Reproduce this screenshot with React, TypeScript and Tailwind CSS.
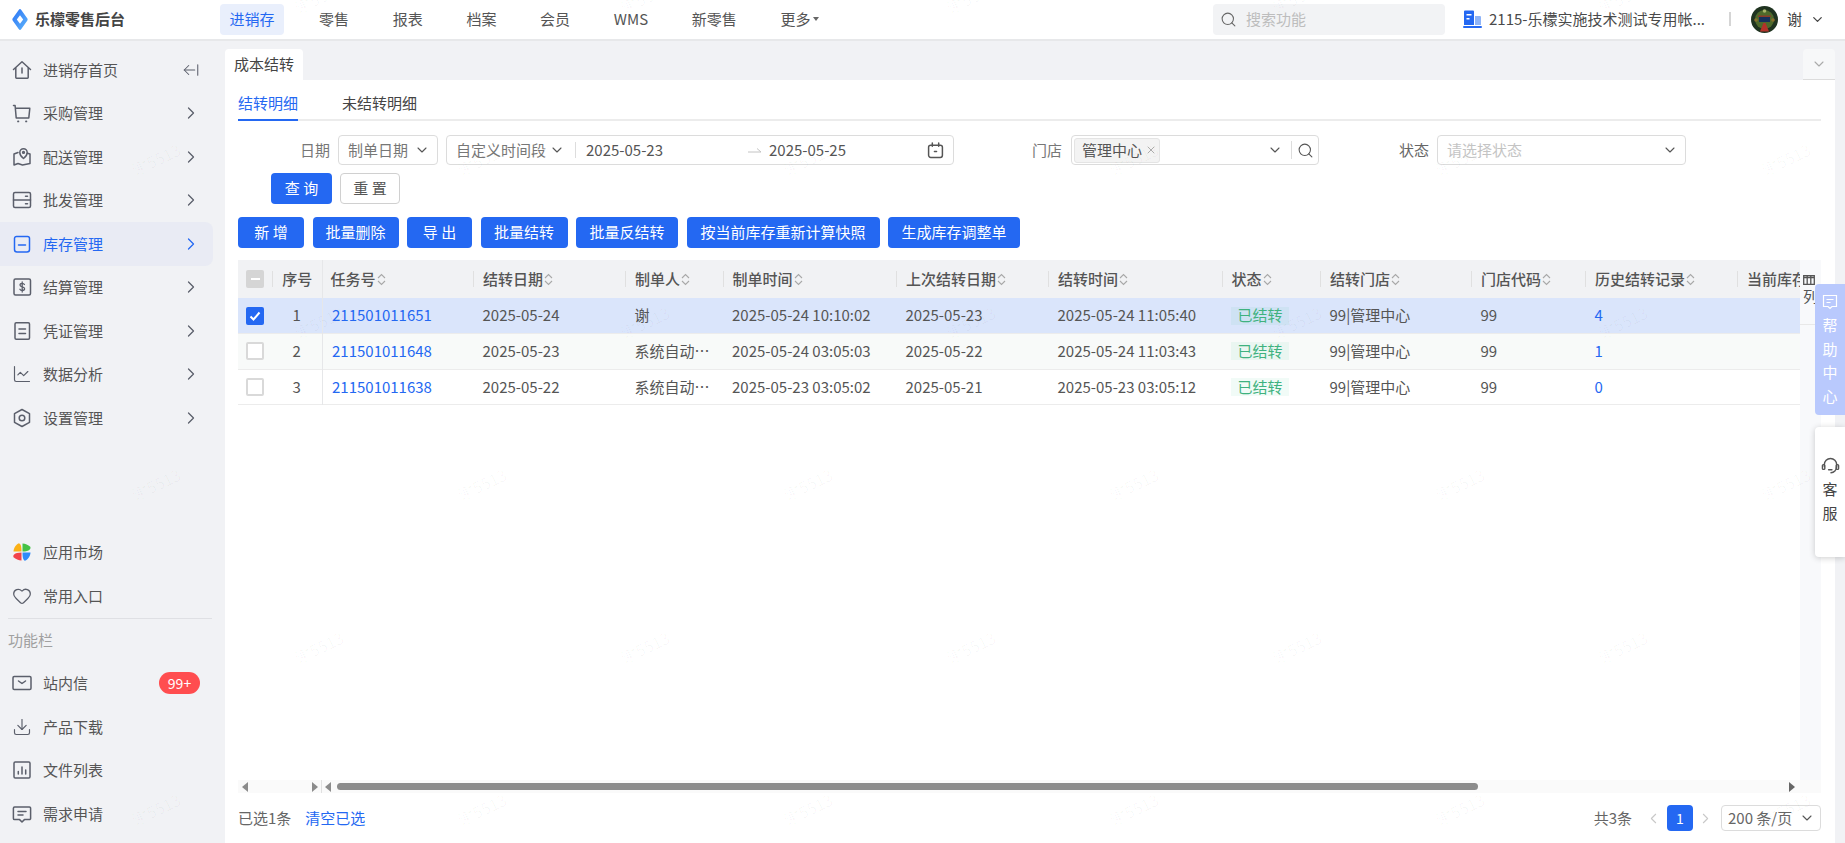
import { ArrowLeftFromLine, ChartLine, ChevronDown, ChevronLeft, ChevronRight, Download, Heart, Search, X } from "lucide-react";
import type { ReactNode } from "react";

const BLUE = "text-[#2468f2]";

function Svg({ children, className = "" }: { children: ReactNode; className?: string }) {
  return (
    <svg viewBox="0 0 20 20" fill="none" stroke="currentColor" strokeWidth="1.5" strokeLinecap="round" strokeLinejoin="round" className={`size-[20px] shrink-0 ${className}`}>
      {children}
    </svg>
  );
}

const icons: Record<string, ReactNode> = {
  home: (
    <Svg>
      <path d="M1.5 9.5 10 1.8l8.5 7.7" />
      <path d="M3.8 8v9.5a.7.7 0 0 0 .7.7h11a.7.7 0 0 0 .7-.7V8" />
      <path d="M10 8v5" />
    </Svg>
  ),
  cart: (
    <Svg>
      <path d="M1.5 2.5h1.6l1.1 12.4h12.6l1-9.6H3.5" />
      <path d="M6 18.4h.4M14 18.4h.4" strokeWidth="1.8" />
    </Svg>
  ),
  map: (
    <Svg>
      <path d="M6 5.5 2 7v11l4-1.5 4.5 1.5 7.5-1.5V7l-2.5-.8" />
      <path d="M11.5 11.5S7.8 8.5 7.8 5.4a3.7 3.7 0 0 1 7.4 0c0 3.1-3.7 6.1-3.7 6.1Z" />
      <circle cx="11.5" cy="5.4" r=".9" />
    </Svg>
  ),
  server: (
    <Svg>
      <rect x="1.5" y="2.5" width="17" height="15" rx="1.5" />
      <path d="M1.5 10h17M13.5 6.3h2M13.5 13.8h2" />
    </Svg>
  ),
  stock: (
    <Svg>
      <path d="M4.5 2.5h11a2 2 0 0 1 2 2v11a2.5 2.5 0 0 1-2.5 2.5H5a2.5 2.5 0 0 1-2.5-2.5v-11a2 2 0 0 1 2-2Z" />
      <path d="M6.5 11h7" />
    </Svg>
  ),
  money: (
    <Svg>
      <rect x="2" y="2" width="16.5" height="16" rx="1.5" />
      <path d="M12.4 7.5c-.4-.8-1.2-1.2-2.2-1.2-1.2 0-2.2.7-2.2 1.8 0 2.5 4.6 1.2 4.6 3.7 0 1.1-1 1.8-2.3 1.8-1.1 0-2-.5-2.4-1.3M10.2 5v10" strokeWidth="1.3" />
    </Svg>
  ),
  voucher: (
    <Svg>
      <rect x="3" y="1.8" width="14.5" height="16.4" rx="1.2" />
      <path d="M7 8h6.5M7 12.5h6.5" />
    </Svg>
  ),
  chart: <ChartLine className="size-[20px] shrink-0" strokeWidth={1.4} />,
  hex: (
    <Svg>
      <path d="m10 1.5 7.5 4.2v8.6L10 18.5l-7.5-4.2V5.7L10 1.5Z" />
      <circle cx="10" cy="10" r="2.8" />
    </Svg>
  ),
  heart: <Heart className="size-[20px] shrink-0" strokeWidth={1.5} />,
  mail: (
    <Svg>
      <rect x="1" y="3.5" width="18" height="13" rx="1.2" />
      <path d="m6.5 8 3.5 2.5L13.5 8" />
    </Svg>
  ),
  download: <Download className="size-[20px] shrink-0" strokeWidth={1.4} />,
  bars: (
    <Svg>
      <rect x="2" y="2" width="16" height="16" rx="1.2" />
      <path d="M6.3 14v-2.5M10 14V7M13.7 14v-4" />
    </Svg>
  ),
  message: (
    <Svg>
      <path d="M2.6 3h14.8a1.2 1.2 0 0 1 1.2 1.2v10.2a1.2 1.2 0 0 1-1.2 1.2h-5L10 18l-2.4-2.4h-5a1.2 1.2 0 0 1-1.2-1.2V4.200A1.2 1.2 0 0 1 2.600 3Z" />
      <path d="M6 7.500h8M6 11h5" />
    </Svg>
  ),
  market: (
    <svg viewBox="0 0 20 20" className="size-[20px] shrink-0">
      <path d="M9.500 9.500H1.500C1.500 6 4 2.500 7 1.200c1.800.9 2.500 3 2.500 8.300Z" fill="#fbb116" />
      <path d="M10.500 9.500V1.500c3 0 5.500 1.700 7.800 3.200.8 1.700-.3 4.800-7.800 4.800Z" fill="#45c246" />
      <path d="M10.500 10.500h8c0 3.500-2.500 7-5.500 8.300-1.800-.9-2.500-3-2.500-8.300Z" fill="#2f8bfa" />
      <path d="M9.500 10.500v8c-3 0-5.800-1.700-8-3.200-.8-1.700.5-4.800 8-4.800Z" fill="#f2434a" />
    </svg>
  ),
};

const mainMenu = [
  { label: "采购管理", icon: "cart" },
  { label: "配送管理", icon: "map" },
  { label: "批发管理", icon: "server" },
  { label: "库存管理", icon: "stock", active: true },
  { label: "结算管理", icon: "money" },
  { label: "凭证管理", icon: "voucher" },
  { label: "数据分析", icon: "chart" },
  { label: "设置管理", icon: "hex" },
];

function MenuRow({ icon, label, active, right }: { icon: string; label: string; active?: boolean; right?: ReactNode }) {
  return (
    <div className={`flex h-[43.5px] w-[213px] items-center rounded-r-lg pl-[12px] ${active ? `bg-[#e9ebf4] ${BLUE}` : "text-[#5b5f6b]"}`}>
      {icons[icon]}
      <span className={`ml-[11px] flex-1 text-[15px] ${active ? "" : "text-[#555555]"}`}>{label}</span>
      {right}
    </div>
  );
}

function Sidebar() {
  const chevron = <ChevronRight className="mr-[12px] size-[20px]" strokeWidth={1.5} />;
  return (
    <aside className="flex h-full w-[225px] shrink-0 flex-col bg-[#f1f2f5] pb-[7.500px] pt-[7px]">
      <MenuRow icon="home" label="进销存首页" right={<ArrowLeftFromLine className="mr-[13px] size-[18px]" strokeWidth={1.4} />} />
      {mainMenu.map(m => (
        <MenuRow key={m.label} icon={m.icon} label={m.label} active={m.active} right={chevron} />
      ))}
      <div className="mt-auto">
        <MenuRow icon="market" label="应用市场" />
        <MenuRow icon="heart" label="常用入口" />
        <div className="ml-[8px] w-[204px] border-t border-[#dfe0e4]" />
        <div className="flex h-[43px] items-center pl-[8px] text-[15px] text-[#a0a0a0]">功能栏</div>
        <MenuRow
          icon="mail"
          label="站内信"
          right={<span className="mr-[13px] flex h-[22px] w-[41px] items-center justify-center rounded-full bg-[#ff4d4f] text-[14px] text-white">99+</span>}
        />
        <MenuRow icon="download" label="产品下载" />
        <MenuRow icon="bars" label="文件列表" />
        <MenuRow icon="message" label="需求申请" />
      </div>
    </aside>
  );
}

function TopBar() {
  const nav = ["零售", "报表", "档案", "会员", "WMS", "新零售"];
  return (
    <header className="flex h-[41px] shrink-0 items-center border-b-2 border-[#e7e8ea] bg-white pb-[1px]">
      <div className="flex w-[220px] shrink-0 items-center pl-[12px]">
        <svg viewBox="0 0 16 21" className="h-[21px] w-[16px]">
          <defs>
            <linearGradient id="logoFill" x1="0" y1="0" x2="1" y2="1">
              <stop offset="0" stopColor="#2b74f5" />
              <stop offset="1" stopColor="#5fb4fb" />
            </linearGradient>
          </defs>
          <path d="M6.700 1 .8 9.300a2 2 0 0 0 0 2.400L6.700 20a1.600 1.600 0 0 0 2.600 0l5.900-8.300a2 2 0 0 0 0-2.400L9.300 1a1.600 1.600 0 0 0-2.600 0Z" fill="url(#logoFill)" />
          <path d="M8 6.200 11.200 10.500 8 14.800 4.800 10.500Z" fill="#fff" />
        </svg>
        <span className="ml-[7px] text-[15px] font-bold text-[#444444]">乐檬零售后台</span>
      </div>
      <div className={`flex h-[31px] w-[64px] items-center justify-center rounded-[4px] bg-[#e9effc] text-[15px] ${BLUE}`}>进销存</div>
      <nav className="ml-[35px] flex items-center gap-[43.700px] text-[15px] text-[#555555]">
        {nav.map(n => (
          <span key={n}>{n}</span>
        ))}
        <span className="flex items-center">
          更多
          <span className="ml-[2px] h-0 w-0 border-x-[3.500px] border-t-[4px] border-x-transparent border-t-[#666666]" />
        </span>
      </nav>
      <div className="ml-auto flex h-[31px] w-[232px] items-center rounded-[4px] bg-[#f2f3f5] pl-[7px] text-[15px] text-[#bdbdbd]">
        <Search className="size-[17px] text-[#666666]" strokeWidth={1.5} />
        <span className="ml-[9px]">搜索功能</span>
      </div>
      <svg viewBox="0 0 19 18" className="ml-[18px] h-[18px] w-[19px] shrink-0">
        <path d="M1 1.500A1 1 0 0 1 2 .5h8a1 1 0 0 1 1 1V15H1Z" fill="#2468f2" />
        <path d="M12 6h5a1 1 0 0 1 1 1v8h-6Z" fill="#8fb4f8" />
        <rect x="3.500" y="4" width="5" height="1.500" fill="#fff" />
        <rect x="3.500" y="8" width="3" height="1.500" fill="#fff" />
        <rect y="16" width="19" height="2" rx="1" fill="#2468f2" />
      </svg>
      <span className="ml-[7px] w-[218px] whitespace-nowrap text-[15px] text-[#4a4a4a]">2115-乐檬实施技术测试专用帐...</span>
      <span className="ml-[22px] h-[14px] w-[2px] bg-[#d5d5d5]" />
      <svg viewBox="0 0 27 27" className="ml-[20px] size-[27px] shrink-0">
        <circle cx="13.500" cy="13.500" r="13.500" fill="#1f3320" />
        <circle cx="13.500" cy="13.500" r="9.500" fill="#4f6a2c" />
        <circle cx="13.500" cy="5" r="1.800" fill="#a8b46a" />
        <rect x="8" y="11" width="11" height="5" fill="#16305c" />
        <rect x="7" y="9.500" width="13" height="1.500" fill="#8c3a2a" />
        <path d="M9 25.500 12.500 17h2L18 25.500Z" fill="#b3322a" />
        <circle cx="5" cy="14" r="1.800" fill="#8a6f2c" />
        <circle cx="22" cy="14" r="1.800" fill="#8a6f2c" />
      </svg>
      <span className="ml-[9px] text-[15px] text-[#444444]">谢</span>
      <ChevronDown className="ml-[8px] mr-[20px] size-[15px] text-[#444444]" strokeWidth={2} />
    </header>
  );
}

function FieldBox({ className = "", children }: { className?: string; children: ReactNode }) {
  return <div className={`flex h-[30px] shrink-0 items-center rounded-[4px] border border-[#dcdcdc] text-[15px] ${className}`}>{children}</div>;
}

const Chev = ({ className = "" }: { className?: string }) => <ChevronDown className={`size-[16px] shrink-0 text-[#555555] ${className}`} strokeWidth={1.6} />;

function Filters() {
  return (
    <div className="mt-[14px] flex h-[30px] items-center text-[15px] text-[#777777]">
      <span className="ml-[62px] w-[38px] shrink-0">日期</span>
      <FieldBox className="w-[100px] pl-[9px] text-[#777777]">
        <span className="flex-1">制单日期</span>
        <Chev className="mr-[7px]" />
      </FieldBox>
      <FieldBox className="ml-[8px] w-[508px] pl-[9px] text-[#777777]">
        <span className="w-[93px]">自定义时间段</span>
        <Chev />
        <span className="ml-[10px] h-[16px] w-px bg-[#dddddd]" />
        <span className="ml-[10px] w-[162px] text-[#555555]">2025-05-23</span>
        <svg viewBox="0 0 14 6" className="h-[6px] w-[14px] text-[#c4c4c4]" fill="none" stroke="currentColor">
          <path d="M0 5h13L9 1.500" />
        </svg>
        <span className="ml-[7px] flex-1 text-[#555555]">2025-05-25</span>
        <svg viewBox="0 0 16 16" className="mr-[9px] size-[17px] text-[#555555]" fill="none" stroke="currentColor" strokeWidth="1.400" strokeLinecap="round">
          <rect x="1.500" y="3" width="13" height="11.500" rx="2" />
          <path d="M5 1v3M11 1v3M7 9h2" />
        </svg>
      </FieldBox>
      <span className="ml-[78px] w-[39px] shrink-0">门店</span>
      <FieldBox className="w-[248px] pl-[2px]">
        <span className="flex h-[25px] w-[86px] items-center rounded-[3px] border border-[#e4e4e4] bg-[#f3f3f3] pl-[7px] text-[#555555]">
          管理中心
          <X className="ml-[3px] size-[12px] text-[#999999]" strokeWidth={1.6} />
        </span>
        <Chev className="ml-auto" />
        <span className="ml-[8px] h-[18px] w-px bg-[#dddddd]" />
        <Search className="ml-[5px] mr-[4px] size-[17px] text-[#555555]" strokeWidth={1.5} />
      </FieldBox>
      <span className="ml-[80px] w-[38px] shrink-0 text-[#666666]">状态</span>
      <FieldBox className="w-[249px] pl-[9px] text-[#c4c4c4]">
        <span className="flex-1">请选择状态</span>
        <Chev className="mr-[7px]" />
      </FieldBox>
    </div>
  );
}

function Btn({ label, width }: { label: string; width: string }) {
  return <button className={`flex h-[31px] shrink-0 items-center justify-center rounded-[4px] bg-[#2468f2] text-[15px] text-white ${width}`}>{label}</button>;
}

const SortIcon = () => (
  <svg viewBox="0 0 9 13" className="ml-[1px] h-[13px] w-[9px] shrink-0 text-[#a8a8a8]" fill="none" stroke="currentColor" strokeWidth="1.100">
    <path d="M1 5 4.500 1.500 8 5M1 8l3.500 3.500L8 8" />
  </svg>
);

const Check = ({ state }: { state: "none" | "on" | "mixed" }) => {
  if (state === "on")
    return (
      <span className="flex size-[18px] items-center justify-center rounded-[2px] bg-[#2468f2]">
        <svg viewBox="0 0 14 14" className="size-[14px]" fill="none" stroke="#fff" strokeWidth="2">
          <path d="m2.500 7.500 3 3 6-7" />
        </svg>
      </span>
    );
  if (state === "mixed")
    return (
      <span className="flex size-[18px] items-center justify-center rounded-[2px] bg-[#d5d5d5]">
        <span className="h-[2px] w-[9px] bg-white" />
      </span>
    );
  return <span className="block size-[18px] rounded-[2px] border-2 border-[#d9d9d9] bg-white" />;
};

const widths = [34, 50, 151, 152, 97.500, 173.500, 152, 173.500, 98.500, 151, 114, 152, 180];
const heads = ["任务号", "结转日期", "制单人", "制单时间", "上次结转日期", "结转时间", "状态", "结转门店", "门店代码", "历史结转记录"];

const rows = [
  { n: 1, id: "211501011651", d: "2025-05-24", who: "谢", t: "2025-05-24 10:10:02", last: "2025-05-23", at: "2025-05-24 11:05:40", hist: 4, bg: "bg-[#dae5fb]" },
  { n: 2, id: "211501011648", d: "2025-05-23", who: "系统自动…", t: "2025-05-24 03:05:03", last: "2025-05-22", at: "2025-05-24 11:03:43", hist: 1, bg: "bg-[#f8faf9]" },
  { n: 3, id: "211501011638", d: "2025-05-22", who: "系统自动…", t: "2025-05-23 03:05:02", last: "2025-05-21", at: "2025-05-23 03:05:12", hist: 0, bg: "bg-white" },
];

function DataTable() {
  const cell = "overflow-hidden whitespace-nowrap pl-[9.500px] text-left font-normal";
  return (
    <div className="mt-[12px] flex h-[533px] flex-col">
      <div className="flex min-h-0 flex-1">
        <div className="min-w-0 flex-1 overflow-hidden">
          <table className="table-fixed border-collapse text-[15px] text-[#555555]" style={{ width: widths.reduce((a, b) => a + b, 0) }}>
            <colgroup>
              {widths.map((w, i) => (
                <col key={i} style={{ width: w }} />
              ))}
            </colgroup>
            <thead>
              <tr className="h-[38px] bg-[#f1f2f4] font-medium">
                <th className="pl-[8px]">
                  <Check state="mixed" />
                </th>
                <th className="font-medium">
                  <div className="flex h-[16px] items-center justify-center border-l border-[#e0e0e0]">序号</div>
                </th>
                {heads.map((h, i) => (
                  <th key={h} className={`font-medium ${i === 0 ? "border-l border-[#e6e7e9]" : ""}`}>
                    <div className={`flex h-[16px] items-center whitespace-nowrap ${i === 0 ? "pl-[8px]" : "border-l border-[#e0e0e0] pl-[9px]"}`}>
                      {h}
                      <SortIcon />
                    </div>
                  </th>
                ))}
                <th className="font-medium">
                  <div className="flex h-[16px] items-center whitespace-nowrap border-l border-[#e0e0e0] pl-[9px]">当前库存数量</div>
                </th>
              </tr>
            </thead>
            <tbody>
              {rows.map(r => (
                <tr key={r.n} className={`h-[35.500px] border-b border-[#ececec] ${r.bg}`}>
                  <td className="pl-[8px]">
                    <Check state={r.n === 1 ? "on" : "none"} />
                  </td>
                  <td className="text-center">{r.n}</td>
                  <td className={`${cell} border-l border-[#e6e7e9] ${BLUE}`}>{r.id}</td>
                  <td className={cell}>{r.d}</td>
                  <td className={cell}>{r.who}</td>
                  <td className={cell}>{r.t}</td>
                  <td className={cell}>{r.last}</td>
                  <td className={cell}>{r.at}</td>
                  <td className={cell}>
                    <span className="inline-flex h-[18px] w-[58px] items-center justify-center bg-[#3cc88c]/[0.07] text-[#3fb27f]">已结转</span>
                  </td>
                  <td className={cell}>99|管理中心</td>
                  <td className={cell}>99</td>
                  <td className={`${cell} ${BLUE}`}>{r.hist}</td>
                  <td />
                </tr>
              ))}
            </tbody>
          </table>
        </div>
        <div className="w-[21px] shrink-0 overflow-hidden bg-[#f8f9fb] text-[15px] text-[#555555]">
          <div className="h-[65px] border-b border-[#e8e8e8] pl-[3px] pt-[15px]">
            <svg viewBox="0 0 12 10" className="h-[10px] w-[12px]" fill="none" stroke="currentColor" strokeWidth="1.300">
              <path d="M.7.7h10.600v8.600H.7ZM4.200.7v8.600M7.800.7v8.600M.7 2.500h10.600" />
            </svg>
            <div className="mt-[1px] leading-[20px]">列</div>
          </div>
        </div>
      </div>
      <div className="flex h-[13px] shrink-0 items-center bg-[#fafafa]">
        <div className="flex h-full w-[84px] items-center justify-between border-r border-[#e0e0e0] pl-[4px] pr-[3px]">
          <span className="h-0 w-0 border-y-[5px] border-r-[6px] border-y-transparent border-r-[#8c8c8c]" />
          <span className="h-0 w-0 border-y-[5px] border-l-[6px] border-y-transparent border-l-[#8c8c8c]" />
        </div>
        <span className="ml-[3px] h-0 w-0 border-y-[5px] border-r-[6px] border-y-transparent border-r-[#8c8c8c]" />
        <span className="ml-[6px] h-[7px] w-[1141px] rounded-full bg-[#8c8c8c]" />
        <span className="ml-[311px] h-0 w-0 border-y-[5px] border-l-[6px] border-y-transparent border-l-[#666666]" />
      </div>
    </div>
  );
}

function Pagination() {
  return (
    <div className="flex h-[50px] items-center text-[15px] text-[#666666]">
      <span>已选1条</span>
      <span className={`ml-[14px] ${BLUE}`}>清空已选</span>
      <span className="ml-auto">共3条</span>
      <ChevronLeft className="ml-[13px] size-[17px] text-[#c8c8c8]" strokeWidth={1.5} />
      <span className="ml-[5px] flex size-[26px] items-center justify-center rounded-[4px] bg-[#2468f2] text-[14px] text-white">1</span>
      <ChevronRight className="ml-[4px] size-[17px] text-[#c8c8c8]" strokeWidth={1.5} />
      <span className="ml-[7px] flex h-[26px] w-[100px] items-center rounded-[4px] border border-[#dcdcdc] pl-[6px]">
        200 条/页
        <Chev className="ml-auto mr-[5px]" />
      </span>
    </div>
  );
}

function Watermarks() {
  const spots: { x: number; y: number }[] = [];
  for (let i = 0; i < 6; i++) {
    for (let j = 0; j < 3; j++) {
      spots.push({ x: 156 + 326 * i, y: 159 + 325 * j });
      spots.push({ x: 319 + 326 * i, y: -3 + 325 * j });
    }
  }
  return (
    <div className="pointer-events-none absolute inset-0 overflow-hidden">
      {spots.map(s => (
        <span
          key={`${s.x}-${s.y}`}
          className="absolute -translate-x-1/2 -translate-y-1/2 -rotate-[25deg] whitespace-nowrap text-[16px] text-black/[0.03]"
          style={{ left: s.x, top: s.y }}
        >
          谢5513
        </span>
      ))}
    </div>
  );
}

function FloatTabs() {
  return (
    <>
      <div className="absolute left-[1815px] top-[284px] flex h-[131px] w-[30px] flex-col items-center rounded-l-[4px] bg-[#b9c9fd] pt-[10px] text-[15px] leading-[23.500px] text-white">
        <svg viewBox="0 0 16 16" className="mb-[3px] size-[16px]" fill="none" stroke="currentColor" strokeWidth="1.200">
          <path d="M1.500 1.500h13v11H10l-2 2-2-2H1.500ZM4.500 5.500h7M4.500 8.500h4" />
        </svg>
        <span>帮</span>
        <span>助</span>
        <span>中</span>
        <span>心</span>
      </div>
      <div className="absolute left-[1815px] top-[427px] flex h-[130px] w-[30px] flex-col items-center rounded-l-[4px] bg-white pt-[30px] text-[15px] leading-[23.500px] text-[#444444] shadow-[0_1px_6px_rgba(0,0,0,0.2)]">
        <svg viewBox="0 0 20 20" className="mb-[1px] size-[19px] text-[#555555]" fill="none" stroke="currentColor" strokeWidth="1.500" strokeLinecap="round">
          <path d="M3.500 10V8a6.500 6.500 0 0 1 13 0v2c0 4-3 6.500-6 6.500" />
          <rect x="1.500" y="8" width="2.500" height="5" rx="1" />
          <rect x="16" y="8" width="2.500" height="5" rx="1" />
          <path d="M8 13.500h3.500" />
        </svg>
        <span>客</span>
        <span>服</span>
      </div>
    </>
  );
}

export default function App() {
  return (
    <div className="relative flex h-[843px] w-[1845px] flex-col overflow-hidden bg-[#f1f2f5]" style={{ fontFamily: '"Noto Sans CJK SC", "Noto Sans", sans-serif' }}>
      <TopBar />
      <div className="flex min-h-0 flex-1">
        <Sidebar />
        <main className="flex min-w-0 flex-1 flex-col pr-[10px]">
          <div className="flex h-[39px] shrink-0 items-end justify-between">
            <div className="flex h-[31px] w-[78px] items-center justify-center rounded-t-[4px] bg-white text-[15px] text-[#444444]">成本结转</div>
            <div className="flex h-[31px] w-[32px] items-center justify-center rounded-t-[4px] border-b border-[#dcdcdc] bg-[#f7f8f9] text-[#aaaaaa]">
              <ChevronDown className="size-[16px]" strokeWidth={1.6} />
            </div>
          </div>
          <div className="flex min-h-0 flex-1 flex-col bg-white pl-[13px] pr-[14px]">
            <div className="flex h-[41px] shrink-0 items-end gap-[44px] border-b-2 border-[#ececec] text-[15px]">
              <span className={`-mb-[2px] flex h-[41px] items-center border-b-2 border-[#2468f2] pt-[7px] ${BLUE}`}>结转明细</span>
              <span className="-mb-[2px] flex h-[41px] items-center pt-[5px] text-[#444444]">未结转明细</span>
            </div>
            <Filters />
            <div className="mt-[8px] flex h-[31px] shrink-0 gap-[8px] pl-[33px]">
              <Btn label="查 询" width="w-[61px]" />
              <button className="flex h-[31px] w-[60px] items-center justify-center rounded-[4px] border border-[#d0d0d0] bg-white text-[15px] text-[#555555]">重 置</button>
            </div>
            <div className="mt-[13px] flex h-[31px] shrink-0 gap-[8.500px]">
              <Btn label="新 增" width="w-[66px]" />
              <Btn label="批量删除" width="w-[86px]" />
              <Btn label="导 出" width="w-[65px]" />
              <Btn label="批量结转" width="w-[87px]" />
              <Btn label="批量反结转" width="w-[102px]" />
              <Btn label="按当前库存重新计算快照" width="w-[193px]" />
              <Btn label="生成库存调整单" width="w-[132px]" />
            </div>
            <DataTable />
            <Pagination />
          </div>
        </main>
      </div>
      <Watermarks />
      <FloatTabs />
    </div>
  );
}
